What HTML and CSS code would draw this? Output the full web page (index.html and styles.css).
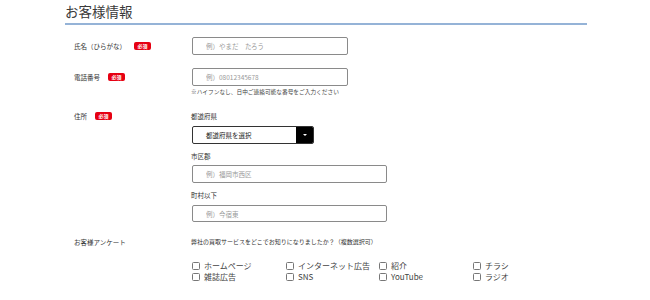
FILE: index.html
```html
<!DOCTYPE html>
<html lang="ja">
<head>
    <meta charset="UTF-8">
    <meta name="viewport" content="width=device-width, initial-scale=1.0">
    <title>お客様情報</title>
    <link rel="stylesheet" href="styles.css">
</head>
<body>
    <div class="section">
        <h2 class="title">お客様情報</h2>

        <div class="form-row row-name">
            <div class="label">氏名（ひらがな）<span class="req">必須</span></div>
            <div class="field">
                <input type="text" class="text-input" placeholder="例）やまだ　たろう">
            </div>
        </div>

        <div class="form-row row-tel">
            <div class="label">電話番号<span class="req">必須</span></div>
            <div class="field">
                <input type="text" class="text-input" placeholder="例）08012345678">
                <p class="note">※ハイフンなし、日中ご連絡可能な番号をご入力ください</p>
            </div>
        </div>

        <div class="form-row row-address">
            <div class="label">住所<span class="req">必須</span></div>
            <div class="field">
                <p class="sub-label">都道府県</p>
                <div class="select">
                    <span class="select-text">都道府県を選択</span>
                    <span class="select-arrow"></span>
                </div>
                <p class="sub-label">市区郡</p>
                <input type="text" class="text-input wide" placeholder="例）福岡市西区">
                <p class="sub-label">町村以下</p>
                <input type="text" class="text-input wide" placeholder="例）今宿東">
            </div>
        </div>

        <div class="form-row row-survey">
            <div class="label">お客様アンケート</div>
            <div class="field">
                <p class="question">弊社の買取サービスをどこでお知りになりましたか？（複数選択可）</p>
                <div class="checks">
                    <label class="check"><span class="box"></span>ホームページ</label>
                    <label class="check"><span class="box"></span>インターネット広告</label>
                    <label class="check"><span class="box"></span>紹介</label>
                    <label class="check"><span class="box"></span>チラシ</label>
                    <label class="check"><span class="box"></span>雑誌広告</label>
                    <label class="check"><span class="box"></span>SNS</label>
                    <label class="check"><span class="box"></span>YouTube</label>
                    <label class="check"><span class="box"></span>ラジオ</label>
                </div>
            </div>
        </div>
    </div>
</body>
</html>
```

FILE: styles.css
```css
body {
    margin: 0;
    background: #fff;
    color: #333;
    font-family: "Noto Sans CJK JP", "Noto Sans", sans-serif;
}
.section {
    margin-left: 65px;
    width: 522px;
}
.title {
    margin: 0;
    padding: 1px 0 2px;
    line-height: 20px;
    font-size: 13.5px;
    font-weight: normal;
    color: #3a3a3a;
    border-bottom: 2px solid #95b3d7;
}
.form-row {
    display: grid;
    grid-template-columns: 117px 1fr;
    padding-left: 9px;
}
.label {
    display: flex;
    align-items: center;
    height: 18px;
    font-size: 6.5px;
    color: #333;
}
.req {
    display: inline-block;
    margin-left: 8px;
    padding: 0 3.5px;
    height: 8px;
    line-height: 8px;
    border-radius: 2px;
    background: #e60012;
    color: #fff;
    font-size: 5px;
    font-weight: bold;
}
.row-name {
    margin-top: 12px;
}
.row-tel {
    margin-top: 13px;
}
.row-address {
    margin-top: 14px;
}
.row-address .label,
.row-survey .label {
    height: 10px;
}
.row-survey {
    margin-top: 15px;
}
.text-input {
    display: block;
    box-sizing: border-box;
    width: 156px;
    height: 18px;
    margin: 0 0 0 1px;
    padding: 0 0 0 13px;
    border: 1px solid #8a8a8a;
    border-radius: 2px;
    font-family: inherit;
    font-size: 6.5px;
    color: #333;
    outline: none;
}
.text-input::placeholder {
    color: #999;
}
.text-input.wide {
    width: 195px;
}
.note {
    margin: 0;
    height: 11px;
    line-height: 11px;
    font-size: 5.7px;
    color: #444;
}
.sub-label {
    margin: 0;
    height: 10px;
    line-height: 10px;
    font-size: 6.5px;
    color: #333;
}
.select {
    display: flex;
    box-sizing: border-box;
    width: 122px;
    height: 18px;
    margin: 5px 0 7px 1px;
    border: 1px solid #333;
    border-radius: 2px;
    overflow: hidden;
}
.select-text {
    flex: 1;
    padding-left: 13px;
    line-height: 16px;
    font-size: 6.5px;
    color: #222;
}
.select-arrow {
    position: relative;
    width: 17px;
    background: #000;
}
.select-arrow::after {
    content: "";
    position: absolute;
    left: 7px;
    top: 7px;
    border-left: 2px solid transparent;
    border-right: 2px solid transparent;
    border-top: 2px solid #fff;
}
.row-address .text-input.wide {
    margin-top: 4px;
    margin-bottom: 7px;
}
.row-address .text-input.wide:last-child {
    margin-top: 5px;
    margin-bottom: 0;
    height: 17px;
}
.question {
    margin: 0;
    height: 10px;
    line-height: 10px;
    font-size: 6px;
    color: #333;
}
.checks {
    display: grid;
    grid-template-columns: 94px 93px 94px 94px;
    margin-top: 13px;
}
.check {
    display: flex;
    align-items: center;
    height: 11px;
    font-size: 8px;
    color: #444;
}
.box {
    box-sizing: border-box;
    width: 8px;
    height: 8px;
    margin-left: 1px;
    margin-right: 4px;
    border: 1px solid #777;
    border-radius: 1.5px;
}
```
